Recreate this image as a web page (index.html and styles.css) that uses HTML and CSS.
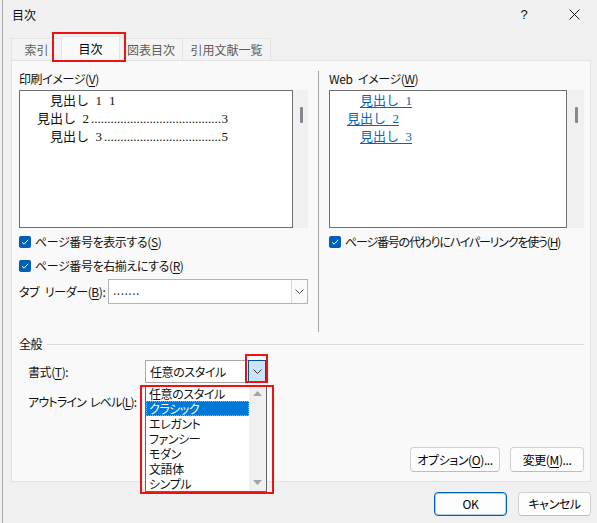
FILE: index.html
```html
<!DOCTYPE html>
<html lang="ja">
<head>
    <meta charset="UTF-8">
    <title>目次</title>
    <link rel="stylesheet" href="styles.css">
</head>
<body>
    <div class="titlebar">
        <span class="title">目次</span>
        <div class="title-buttons">
            <span class="help">?</span>
            <span class="close">
                <svg width="11" height="11" viewBox="0 0 11 11"><path d="M0.5 0.5 L10.5 10.5 M10.5 0.5 L0.5 10.5" stroke="#1a1a1a" stroke-width="1" fill="none"/></svg>
            </span>
        </div>
    </div>

    <div class="tabs">
        <div class="tab tab-index">索引</div>
        <div class="tab active">目次</div>
        <div class="tab tab-figure">図表目次</div>
        <div class="tab tab-cite">引用文献一覧</div>
    </div>

    <div class="panel">
        <div class="top">
            <div class="col col-left">
                <div class="group-label">印刷イメージ(<u>V</u>)</div>
                <div class="preview-wrap">
                    <div class="preview">
                        <div class="toc-line level1"><span>見出し&ensp;1</span><span class="page-gap">1</span></div>
                        <div class="toc-line level0"><span>見出し&ensp;2</span><span class="leader">........................................</span><span class="page-no">3</span></div>
                        <div class="toc-line level1"><span>見出し&ensp;3</span><span class="leader">....................................</span><span class="page-no">5</span></div>
                    </div>
                    <div class="vscroll"><span class="thumb"></span></div>
                </div>
                <div class="check">
                    <span class="box"><svg width="12" height="12" viewBox="0 0 12 12"><path d="M3 6.2 L5.1 8.2 L9.2 3.8" stroke="#fff" stroke-width="1" fill="none"/></svg></span>
                    <span>ページ番号を表示する(<u>S</u>)</span>
                </div>
                <div class="check">
                    <span class="box"><svg width="12" height="12" viewBox="0 0 12 12"><path d="M3 6.2 L5.1 8.2 L9.2 3.8" stroke="#fff" stroke-width="1" fill="none"/></svg></span>
                    <span>ページ番号を右揃えにする(<u>R</u>)</span>
                </div>
                <div class="leader-row">
                    <span class="leader-label">タブ&ensp;リーダー(<u>B</u>):</span>
                    <div class="combo leader-combo">
                        <span class="combo-text dots">.......</span>
                        <span class="combo-btn">
                            <svg width="9" height="5" viewBox="0 0 9 5"><path d="M0.5 0.5 L4.5 4.5 L8.5 0.5" stroke="#555" stroke-width="1" fill="none"/></svg>
                        </span>
                    </div>
                </div>
            </div>

            <div class="divider"></div>

            <div class="col col-right">
                <div class="group-label">Web&ensp;イメージ(<u>W</u>)</div>
                <div class="preview-wrap">
                    <div class="preview">
                        <div class="toc-line level1"><a>見出し&ensp;1</a></div>
                        <div class="toc-line level0"><a>見出し&ensp;2</a></div>
                        <div class="toc-line level1"><a>見出し&ensp;3</a></div>
                    </div>
                    <div class="vscroll wide"><span class="thumb"></span></div>
                </div>
                <div class="check">
                    <span class="box"><svg width="12" height="12" viewBox="0 0 12 12"><path d="M3 6.2 L5.1 8.2 L9.2 3.8" stroke="#fff" stroke-width="1" fill="none"/></svg></span>
                    <span class="tight">ページ番号の代わりにハイパーリンクを使う(<u>H</u>)</span>
                </div>
            </div>
        </div>

        <div class="general">
            <div class="section-head">
                <span>全般</span>
                <span class="rule"></span>
            </div>
            <div class="form-row">
                <span class="form-label">書式(<u>T</u>):</span>
                <div class="combo style-combo">
                    <span class="combo-text">任意のスタイル</span>
                    <span class="combo-btn pressed">
                        <svg width="9" height="5" viewBox="0 0 9 5"><path d="M0.5 0.5 L4.5 4.5 L8.5 0.5" stroke="#333" stroke-width="1" fill="none"/></svg>
                    </span>
                    <div class="dropdown">
                        <div class="dropdown-items">
                            <div class="item">任意のスタイル</div>
                            <div class="item selected">クラシック</div>
                            <div class="item">エレガント</div>
                            <div class="item">ファンシー</div>
                            <div class="item">モダン</div>
                            <div class="item">文語体</div>
                            <div class="item">シンプル</div>
                        </div>
                        <div class="list-scroll">
                            <svg width="9" height="5" viewBox="0 0 9 5"><path d="M0 5 L4.5 0 L9 5 Z" fill="#a3a3a3"/></svg>
                            <svg width="9" height="5" viewBox="0 0 9 5"><path d="M0 0 L4.5 5 L9 0 Z" fill="#a3a3a3"/></svg>
                        </div>
                    </div>
                </div>
            </div>
            <div class="form-row outline-row">
                <span class="form-label tight-small">アウトライン レベル(<u>L</u>):</span>
            </div>
            <div class="panel-buttons">
                <button class="btn btn-option">オプション(<u>O</u>)...</button>
                <button class="btn btn-modify">変更(<u>M</u>)...</button>
            </div>
        </div>
    </div>

    <div class="footer">
        <button class="btn btn-footer primary">OK</button>
        <button class="btn btn-footer">キャンセル</button>
    </div>
</body>
</html>
```

FILE: styles.css
```css
body {
    margin: 0;
    width: 597px;
    height: 523px;
    overflow: hidden;
    font-family: "Noto Sans CJK JP", "Noto Sans", sans-serif;
    font-size: 12px;
    font-feature-settings: "palt";
    letter-spacing: -0.4px;
    color: #111;
    background: linear-gradient(to right, #f0f0f0 2px, #a9a9a9 2px, #a9a9a9 3px, #f0f0f0 3px);
}

u {
    text-decoration-thickness: 1px;
    text-underline-offset: 2px;
}

.tight {
    letter-spacing: -1.2px;
}

.tight-small {
    letter-spacing: -0.8px;
    word-spacing: 2px;
}

/* title bar */
.titlebar {
    height: 29px;
    display: flex;
    align-items: center;
    padding-left: 12px;
}

.titlebar .title {
    line-height: 16px;
    letter-spacing: 0;
}

.title-buttons {
    margin-left: auto;
    display: flex;
    align-items: center;
}

.title-buttons span {
    width: 46px;
    height: 29px;
    display: flex;
    align-items: center;
    justify-content: center;
}

.title-buttons .help {
    font-family: "Liberation Sans", sans-serif;
    font-size: 13px;
    padding-right: 4px;
}

/* tabs */
.tabs {
    height: 31px;
    display: flex;
    align-items: flex-end;
    padding-left: 11px;
}

.tab {
    height: 22px;
    line-height: 21px;
    text-align: center;
    letter-spacing: 0;
    color: #5c5c5c;
    background-color: #f3f3f3;
    border: 1px solid #e4e4e4;
    border-bottom: none;
    box-sizing: border-box;
}

.tab-index { width: 51px; }
.tab-figure { width: 63px; border-left: none; }
.tab-cite { width: 88px; border-left: none; }

.tab.active {
    width: 58px;
    height: 25px;
    line-height: 24px;
    color: #000;
    background-color: #f9f9f9;
    border-left: none;
    margin-bottom: -1px;
    position: relative;
    z-index: 2;
}

.tab.active::after {
    content: "";
    position: absolute;
    left: -10px;
    top: -5px;
    right: -7px;
    bottom: -1px;
    border: 2px solid #ee1111;
}

/* tab page */
.panel {
    margin-left: 11px;
    width: 580px;
    height: 422px;
    box-sizing: border-box;
    border: 1px solid #e4e4e4;
    background-color: #f9f9f9;
}

.top {
    display: flex;
    height: 271px;
}

.col {
    padding-top: 10px;
    flex-shrink: 0;
}

.col-left {
    width: 289px;
    margin-left: 7px;
}

.col-right {
    width: 255px;
}

.divider {
    width: 1px;
    flex-shrink: 0;
    margin: 10px 10px 0 10px;
    background-color: #a5a5a5;
}

.group-label {
    height: 16px;
    line-height: 16px;
    margin-bottom: 3px;
}

.preview-wrap {
    display: flex;
    height: 138px;
}

.preview {
    flex: 1;
    min-width: 0;
    overflow: hidden;
    border: 1px solid #6e6e6e;
    background-color: #ffffff;
    padding-top: 1px;
    font-family: "Liberation Serif", "Noto Sans CJK JP", serif;
    font-size: 13px;
    font-feature-settings: normal;
    letter-spacing: 0;
}

.toc-line {
    height: 18px;
    line-height: 18px;
    display: flex;
    margin-right: 64px;
    white-space: nowrap;
}

.toc-line.level0 { padding-left: 17px; }
.toc-line.level1 { padding-left: 30px; }

.toc-line .page-gap {
    margin-left: 7px;
}

.toc-line .leader {
    margin-left: 2px;
}

.toc-line .page-no {
    margin-left: auto;
}

.toc-line a {
    color: #0563c1;
    text-decoration: underline;
    text-underline-offset: 2px;
}

.vscroll {
    width: 15px;
    flex-shrink: 0;
    background-color: #f0f0f0;
    position: relative;
}

.vscroll.wide {
    width: 17px;
}

.vscroll .thumb {
    position: absolute;
    left: 7px;
    top: 17px;
    width: 3px;
    height: 16px;
    border-radius: 1px;
    background-color: #8a8590;
}

.vscroll.wide .thumb {
    left: 8px;
}

.check {
    display: flex;
    align-items: center;
    gap: 4px;
    height: 20px;
    line-height: 16px;
    margin-top: 4px;
    white-space: nowrap;
}

.check .box {
    width: 12px;
    height: 12px;
    border-radius: 2px;
    background-color: #005fb8;
    display: flex;
}

.leader-row {
    display: flex;
    align-items: center;
    margin-top: 3px;
}

.leader-label {
    width: 89px;
    line-height: 16px;
    white-space: nowrap;
}

/* combo boxes */
.combo {
    position: relative;
    display: flex;
    align-items: center;
    box-sizing: border-box;
    background-color: #ffffff;
    border: 1px solid #b4b4b4;
}

.combo-text {
    flex: 1;
    padding-left: 4px;
    line-height: 16px;
}

.combo-btn {
    display: flex;
    align-items: center;
    justify-content: center;
    box-sizing: border-box;
}

.leader-combo {
    width: 200px;
    height: 25px;
}

.leader-combo .dots {
    color: #1f3a66;
    letter-spacing: 0.5px;
    padding-bottom: 3px;
}

.leader-combo .combo-btn {
    width: 16px;
    height: 23px;
    border-left: 1px solid #d9d9d9;
    background-color: #fbfbfb;
}

/* general section */
.general {
    padding: 4px 0 0 7px;
}

.section-head {
    display: flex;
    align-items: center;
    height: 16px;
    line-height: 16px;
}

.section-head .rule {
    flex: 1;
    height: 1px;
    margin: 0 6px 0 5px;
    background-color: #dcdcdc;
}

.form-row {
    display: flex;
    align-items: center;
    margin-top: 8px;
    padding-left: 9px;
    height: 23px;
}

.form-label {
    width: 117px;
    line-height: 16px;
    white-space: nowrap;
}

.style-combo {
    width: 121px;
    height: 23px;
    border-color: #a8a8a8;
    z-index: 3;
}

.style-combo .combo-btn {
    width: 18px;
    height: 23px;
    margin: 0 -1px 0 0;
}

.combo-btn.pressed {
    background-color: #cce4f7;
    border: 1px solid #005499;
    position: relative;
}

.combo-btn.pressed::after {
    content: "";
    position: absolute;
    left: -4px;
    top: -7px;
    right: -3px;
    bottom: -1px;
    border: 2px solid #ee1111;
}

.outline-row {
    margin-top: 9px;
    height: 20px;
}

.dropdown {
    position: absolute;
    left: -1px;
    top: 24px;
    width: 122px;
    height: 107px;
    box-sizing: border-box;
    border: 1px solid #646464;
    background-color: #ffffff;
    display: flex;
}

.dropdown::after {
    content: "";
    position: absolute;
    left: -6px;
    top: -1px;
    right: -8px;
    bottom: -3px;
    border: 2px solid #ee1111;
}

.dropdown-items {
    flex: 1;
}

.dropdown .item {
    height: 15px;
    line-height: 15px;
    padding-left: 3px;
    box-sizing: border-box;
    white-space: nowrap;
}

.dropdown .item.selected {
    background-color: #0078d7;
    color: #ffffff;
    border: 1px dotted #f0a030;
    line-height: 13px;
    padding-left: 2px;
}

.list-scroll {
    width: 17px;
    background-color: #f0f0f0;
    display: flex;
    flex-direction: column;
    justify-content: space-between;
    align-items: center;
    padding: 5px 0 6px 0;
    box-sizing: border-box;
}

.list-scroll svg {
    display: block;
}

/* buttons */
.btn {
    font-family: inherit;
    font-size: 12px;
    font-feature-settings: "palt";
    letter-spacing: -0.4px;
    color: #000;
    background-color: #fdfdfd;
    border: 1px solid #d0d0d0;
    border-bottom-color: #bcbcbc;
    border-radius: 4px;
    padding: 0;
    line-height: 16px;
}

.panel-buttons {
    display: flex;
    justify-content: flex-end;
    gap: 10px;
    margin-top: 35px;
    padding-right: 6px;
}

.btn-option {
    width: 90px;
    height: 25px;
}

.btn-modify {
    width: 74px;
    height: 25px;
}

.footer {
    display: flex;
    justify-content: flex-end;
    gap: 11px;
    padding: 10px 6px 0 0;
}

.btn-footer {
    width: 73px;
    height: 24px;
}

.btn.primary {
    border: 1px solid #005fb8;
    box-shadow: inset 0 0 0 1px rgba(0, 95, 184, 0.3);
}
```
